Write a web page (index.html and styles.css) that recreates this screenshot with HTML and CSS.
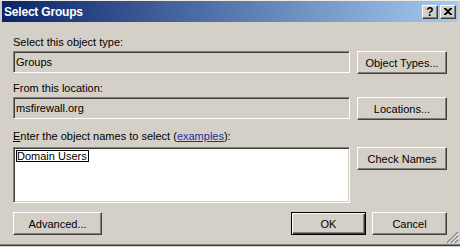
FILE: index.html
```html
<!DOCTYPE html>
<html>
<head>
<meta charset="utf-8">
<link rel="stylesheet" href="styles.css">
</head>
<body>
<div class="window">
  <div class="titlebar">
    <span class="title">Select Groups</span>
    <div class="tb-buttons">
      <span class="tb-btn help">?</span>
      <span class="tb-btn close"><svg width="8" height="7" viewBox="0 0 8 7"><path d="M0 0h2l2 2 2-2h2v1L5 3.5 8 6v1H6L4 5 2 7H0V6l3-2.5L0 1z" fill="#000"/></svg></span>
    </div>
  </div>
  <div class="content">
    <div class="label l1">Select this object type:</div>
    <div class="row">
      <div class="field">Groups</div>
      <button class="btn">Object Types...</button>
    </div>
    <div class="label l2">From this location:</div>
    <div class="row">
      <div class="field">msfirewall.org</div>
      <button class="btn">Locations...</button>
    </div>
    <div class="label l3"><u>E</u>nter the object names to select (<a class="link">examples</a>):</div>
    <div class="row">
      <div class="field area"><span class="name">Domain Users</span></div>
      <button class="btn">Check Names</button>
    </div>
    <div class="footer">
      <button class="btn">Advanced...</button>
      <div class="spacer"></div>
      <button class="btn default">OK</button>
      <button class="btn">Cancel</button>
    </div>
  </div>
  <svg class="grip" width="12" height="12" viewBox="0 0 12 12">
    <path d="M11 0L0 11M11 4L4 11M11 8L8 11" stroke="#808080" stroke-width="1.4"/>
    <path d="M11 1.4L1.4 11M11 5.4L5.4 11M11 9.4L9.4 11" stroke="#fff" stroke-width="0.8"/>
  </svg>
</div>
</body>
</html>
```
FILE: styles.css
```css
html, body {
  margin: 0;
  padding: 0;
}
body {
  width: 460px;
  height: 247px;
  overflow: hidden;
  background: #d4d0c8;
  font-family: "Liberation Sans", Arial, sans-serif;
  font-size: 11px;
  color: #000;
}
.window {
  position: relative;
  height: 245px;
  border-top: 1px solid #eeeae4;
  border-bottom: 1px solid #404040;
  box-sizing: content-box;
  height: 244px;
  box-shadow: inset 0 -1px #808080;
}
.titlebar {
  margin: 0 2px 0 2px;
  height: 21px;
  background: linear-gradient(to right, #0a246a, #a6caf0);
  display: flex;
  align-items: center;
  justify-content: space-between;
  padding: 0 2px 0 2px;
}
.title {
  color: #fff;
  font-weight: bold;
  font-size: 12px;
  letter-spacing: -0.2px;
}
.tb-buttons {
  display: flex;
  gap: 2px;
}
.tb-btn {
  width: 16px;
  height: 14px;
  box-sizing: border-box;
  background: #d4d0c8;
  border: 1px solid;
  border-color: #fff #404040 #404040 #fff;
  box-shadow: inset -1px -1px #808080;
  display: flex;
  align-items: center;
  justify-content: center;
  font-weight: bold;
  font-size: 12px;
  line-height: 12px;
}
.content {
  padding: 14px 13px 0 13px;
}
.label {
  height: 13px;
  line-height: 13px;
  margin-bottom: 2px;
}
.l2 {
  margin-top: 8px;
}
.l3 {
  margin-top: 10px;
  margin-bottom: 4px;
}
.link {
  color: #1d2ea6;
  text-decoration: underline;
}
.row {
  display: grid;
  grid-template-columns: 337px 90px;
  column-gap: 7px;
  align-items: start;
}
.field {
  height: 22px;
  box-sizing: border-box;
  border: 1px solid;
  border-color: #808080 #fff #fff #808080;
  box-shadow: inset 1px 1px #404040, inset -1px -1px #d4d0c8;
  padding: 0 2px 0 2px;
  line-height: 20px;
  background: #d4d0c8;
}
.area {
  height: 56px;
  background: #fff;
  padding: 2px 2px 0 2px;
  line-height: 13px;
}
.name {
  display: inline-block;
  border: 1px solid #000;
  padding: 0 1px 0 0;
  line-height: 10px;
  height: 10px;
  text-decoration: underline;
}
.btn {
  height: 23px;
  width: 90px;
  box-sizing: border-box;
  margin: 0;
  padding: 0;
  background: #d4d0c8;
  border: 1px solid;
  border-color: #fff #404040 #404040 #fff;
  box-shadow: inset -1px -1px #808080;
  font-family: "Liberation Sans", Arial, sans-serif;
  font-size: 11px;
  color: #000;
}
.footer {
  display: flex;
  gap: 6px;
  margin-top: 9px;
}
.spacer {
  flex: 1;
}
.footer .btn {
  width: 89px;
}
.footer .btn.default,
.footer .btn:last-child {
  width: 75px;
}
.btn.default {
  border: 1px solid #000;
  box-shadow: inset 1px 1px #fff, inset -1px -1px #404040, inset -2px -2px #808080;
}
.grip {
  position: absolute;
  right: 1px;
  bottom: 1px;
}
```
